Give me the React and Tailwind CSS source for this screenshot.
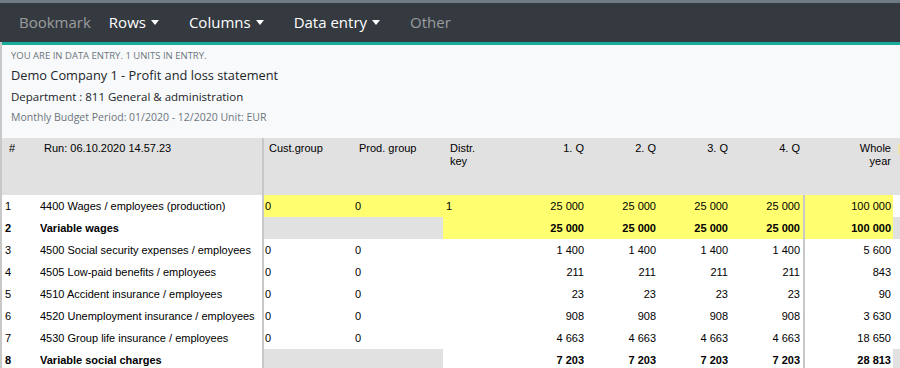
const rows = [
  { n: 1, name: "4400 Wages / employees (production)", cust: "0", prod: "0", key: "1", q: ["25 000", "25 000", "25 000", "25 000"], year: "100 000", entry: true },
  { n: 2, name: "Variable wages", q: ["25 000", "25 000", "25 000", "25 000"], year: "100 000", sum: true, yellow: true },
  { n: 3, name: "4500 Social security expenses / employees", cust: "0", prod: "0", q: ["1 400", "1 400", "1 400", "1 400"], year: "5 600" },
  { n: 4, name: "4505 Low-paid benefits / employees", cust: "0", prod: "0", q: ["211", "211", "211", "211"], year: "843" },
  { n: 5, name: "4510 Accident insurance / employees", cust: "0", prod: "0", q: ["23", "23", "23", "23"], year: "90" },
  { n: 6, name: "4520 Unemployment insurance / employees", cust: "0", prod: "0", q: ["908", "908", "908", "908"], year: "3 630" },
  { n: 7, name: "4530 Group life insurance / employees", cust: "0", prod: "0", q: ["4 663", "4 663", "4 663", "4 663"], year: "18 650" },
  { n: 8, name: "Variable social charges", q: ["7 203", "7 203", "7 203", "7 203"], year: "28 813", sum: true },
];

function Caret() {
  return (
    <span className="inline-block w-0 h-0 ml-[5px] align-[3px] border-l-[4.5px] border-r-[4.5px] border-t-[5px] border-l-transparent border-r-transparent border-t-white" />
  );
}

function TableRow({ r }) {
  const yellowAll = r.entry;
  const yellowNums = r.entry || r.yellow;
  const grayGroups = r.sum;
  const weight = r.sum ? "font-bold" : "";
  return (
    <div className={`flex h-[22px] items-center text-[11px] leading-[22px] text-black ${weight}`}>
      <div className="w-[34px] pl-[3px]">{r.n}</div>
      <div className="w-[226px] pl-[4px] whitespace-nowrap">{r.name}</div>
      <div className={`w-[91px] h-full border-l-2 border-[#c8c8c8] pl-[1px] ${yellowAll ? "bg-[#ffff70]" : grayGroups ? "bg-[#e1e1e1]" : ""}`}>
        {r.cust}
      </div>
      <div className={`w-[90px] h-full pl-[2px] ${yellowAll ? "bg-[#ffff70]" : grayGroups ? "bg-[#e1e1e1]" : ""}`}>{r.prod}</div>
      <div className={`w-[72px] h-full pl-[3px] ${yellowNums ? "bg-[#ffff70]" : ""}`}>{r.key}</div>
      {r.q.map((v, i) => (
        <div key={i} className={`w-[72px] h-full pr-[3px] text-right whitespace-nowrap ${yellowNums ? "bg-[#ffff70]" : ""}`}>
          {v}
        </div>
      ))}
      <div className={`w-[90px] h-full border-l-2 border-[#c8c8c8] pr-[2px] text-right whitespace-nowrap ${yellowNums ? "bg-[#ffff70]" : ""}`}>
        {r.year}
      </div>
      <div className={`w-[7px] h-full ${r.sum ? "bg-[#e1e1e1]" : ""}`} />
    </div>
  );
}

export default function App() {
  return (
    <div className="w-[900px] h-[368px] overflow-hidden bg-white" style={{ fontFamily: "'Open Sans', sans-serif" }}>
      {/* Top nav */}
      <div className="h-[3px] bg-[#6f7c86]" />
      <div className="h-[39px] bg-[#343a40] flex items-center text-[15px]">
        <span className="ml-[19px] text-white/50">Bookmark</span>
        <span className="ml-[18px] text-white">
          Rows
          <Caret />
        </span>
        <span className="ml-[30px] text-white">
          Columns
          <Caret />
        </span>
        <span className="ml-[30px] text-white">
          Data entry
          <Caret />
        </span>
        <span className="ml-[30px] text-white/50">Other</span>
      </div>

      <div className="border-l-2 border-[#c8c8c8]">
        <div className="h-[3px] bg-[#19ab9c]" />

        {/* Report header */}
        <div className="h-[93px] bg-[#f8f9fa] pl-[9px] pt-[1px]">
          <div className="h-[19px] leading-[19px] text-[9.5px] text-[#6c757d] uppercase">
            You are in data entry. 1 units in entry.
          </div>
          <div className="h-[21px] leading-[21px] text-[12.8px] text-[#212529]">
            Demo Company 1 - Profit and loss statement
          </div>
          <div className="h-[21px] leading-[21px] text-[11.5px] text-[#212529]">
            Department : 811 General &amp; administration
          </div>
          <div className="h-[20px] leading-[20px] text-[10.5px] text-[#6c757d]">
            Monthly Budget Period: 01/2020 - 12/2020 Unit: EUR
          </div>
        </div>

        {/* Table */}
        <div style={{ fontFamily: "'Liberation Sans', Arial, sans-serif" }}>
          <div className="flex h-[57px] bg-[#e1e1e1] text-[11px] leading-[13px] text-black">
            <div className="w-[34px] pl-[7px] pt-[4px]">#</div>
            <div className="w-[226px] pl-[8px] pt-[4px]">Run: 06.10.2020 14.57.23</div>
            <div className="w-[91px] border-l-2 border-[#c8c8c8] pl-[5px] pt-[4px]">Cust.group</div>
            <div className="w-[90px] pl-[6px] pt-[4px]">Prod. group</div>
            <div className="w-[72px] pl-[7px] pt-[4px]">
              Distr.
              <br />
              key
            </div>
            {["1. Q", "2. Q", "3. Q", "4. Q"].map((q) => (
              <div key={q} className="w-[72px] pr-[3px] pt-[4px] text-right">
                {q}
              </div>
            ))}
            <div className="w-[90px] pr-[2px] pt-[4px] text-right border-l-2 border-[#e1e1e1]">
              Whole
              <br />
              year
            </div>
            <div className="w-[7px] flex justify-end pt-[6px]">
              <div className="w-[2px] h-[10px] bg-[#efe3a8]" />
            </div>
          </div>
          {rows.map((r) => (
            <TableRow key={r.n} r={r} />
          ))}
        </div>
      </div>
    </div>
  );
}
